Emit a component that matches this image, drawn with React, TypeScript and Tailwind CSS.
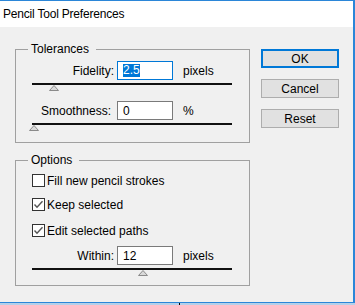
import React from "react";

function Thumb({ left }: { left: string }) {
  return (
    <svg
      className={`absolute top-[2px] ${left}`}
      width="10"
      height="6"
      viewBox="0 0 10 6"
    >
      <polygon points="5,0.5 9.5,5.5 0.5,5.5" fill="#d9d9d9" stroke="#8a8a8a" strokeWidth="1" />
    </svg>
  );
}

function Track({ thumb, mt }: { thumb: string; mt: string }) {
  return (
    <div className={`relative ${mt} ml-[16px] w-[200px] h-[2px] bg-[#111]`}>
      <Thumb left={thumb} />
    </div>
  );
}

function Field({
  label,
  value,
  unit,
  focused,
  labelPad,
  mt,
}: {
  label: string;
  value: string;
  unit: string;
  focused?: boolean;
  labelPad: string;
  mt: string;
}) {
  return (
    <div className={`flex items-center h-[19px] ${mt}`}>
      <div className={`w-[98px] text-right ${labelPad}`}>{label}</div>
      <div
        className={`ml-[3px] w-[56px] h-[19px] flex items-center pl-[5px] bg-white border ${
          focused ? "border-[#0078d7]" : "border-[#7a7a7a]"
        }`}
      >
        {focused ? (
          <span className="bg-[#0078d7] text-white leading-[13px] px-[0px]">{value}</span>
        ) : (
          <span>{value}</span>
        )}
      </div>
      <div className="ml-[10px]">{unit}</div>
    </div>
  );
}

function Check({ checked, label, mt }: { checked: boolean; label: string; mt: string }) {
  return (
    <div className={`flex items-center h-[13px] ml-[16px] ${mt}`}>
      <svg width="13" height="13" viewBox="0 0 13 13">
        <rect x="0.5" y="0.5" width="12" height="12" fill="#fff" stroke="#333" />
        {checked && (
          <polyline points="2.5,6.5 5,9.2 10.5,3.2" fill="none" stroke="#555" strokeWidth="1.4" />
        )}
      </svg>
      <span className="ml-[2px]">{label}</span>
    </div>
  );
}

function Button({ children, primary }: { children: React.ReactNode; primary?: boolean }) {
  return (
    <div
      className={`w-[78px] h-[19px] flex items-center justify-center bg-[#e1e1e1] ${
        primary ? "border-2 border-[#0078d7]" : "border border-[#adadad]"
      }`}
    >
      {children}
    </div>
  );
}

export default function App() {
  return (
    <div className="w-[355px] h-[305px] flex flex-col bg-[#b4d0ea] [font-family:'Liberation_Sans',Arial,sans-serif] text-[12px] text-black">
      <div className="w-[355px] h-[303px] flex flex-col border-t border-r-2 border-b border-[#2b86d8] bg-[#f0f0f0]">
        <div className="h-[26px] bg-white pl-[3px] leading-[26px] tracking-[-0.2px]">Pencil Tool Preferences</div>
        <div className="flex pl-[15px] pt-[15px]">
          <div className="flex flex-col w-[235px]">
            <fieldset className="border border-[#a0a0a0] pb-[17px]">
              <legend className="ml-[12px] pl-[3px] pr-[7px] leading-[14px]">Tolerances</legend>
              <Field label="Fidelity:" value="2.5" unit="pixels" focused labelPad="pr-0" mt="mt-[5px]" />
              <Track thumb="left-[17px]" mt="mt-[3px]" />
              <Field label="Smoothness:" value="0" unit="%" labelPad="pr-[3px]" mt="mt-[16px]" />
              <Track thumb="left-[-3px]" mt="mt-[3px]" />
            </fieldset>
            <fieldset className="mt-[10px] border border-[#a0a0a0] pb-[15px]">
              <legend className="ml-[12px] pl-[3px] pr-[7px] leading-[14px]">Options</legend>
              <Check checked={false} label="Fill new pencil strokes" mt="mt-[7px]" />
              <Check checked label="Keep selected" mt="mt-[11px]" />
              <Check checked label="Edit selected paths" mt="mt-[13px]" />
              <Field label="Within:" value="12" unit="pixels" labelPad="pr-0" mt="mt-[9px]" />
              <Track thumb="left-[106px]" mt="mt-[3px]" />
            </fieldset>
          </div>
          <div className="ml-[11px] mt-[7px] flex flex-col gap-[11px]">
            <Button primary>OK</Button>
            <Button>Cancel</Button>
            <Button>Reset</Button>
          </div>
        </div>
      </div>
      <div className="flex-1 flex pl-[179px]">
        <div className="w-[1px] bg-black" />
      </div>
    </div>
  );
}
